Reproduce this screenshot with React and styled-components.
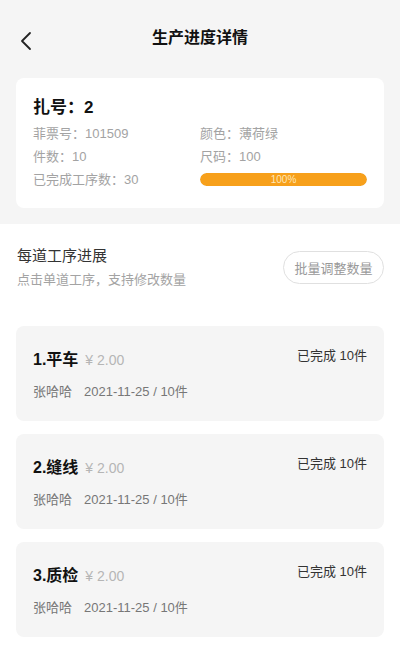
import React from "react";
import styled, { createGlobalStyle } from "styled-components";

const Global = createGlobalStyle`
  html, body { margin: 0; padding: 0; background: #ffffff; }
  body { font-family: "Liberation Sans", "Noto Sans CJK SC", sans-serif; -webkit-font-smoothing: antialiased; }
  * { box-sizing: border-box; }
`;

const Page = styled.div`
  width: 400px;
  min-height: 666px;
  background: #ffffff;
  display: flex;
  flex-direction: column;
`;

const Top = styled.div`
  background: #f5f5f5;
  padding: 0 16px 16px;
`;

const NavBar = styled.div`
  height: 78px;
  display: flex;
  align-items: center;
  justify-content: center;
  position: relative;
  padding-bottom: 2px;
`;

const BackBtn = styled.button`
  position: absolute;
  left: 0;
  top: 31px;
  width: 20px;
  height: 20px;
  border: 0;
  background: none;
  padding: 0;
  display: flex;
  align-items: center;
  justify-content: center;
`;

const Title = styled.h1`
  margin: 0;
  font-size: 16px;
  font-weight: 700;
  color: #111;
  line-height: 1;
`;

const InfoCard = styled.div`
  background: #ffffff;
  border-radius: 8px;
  padding: 18px 17px 20px;
  height: 130px;
`;

const BundleNo = styled.div`
  font-size: 17px;
  font-weight: 700;
  color: #111;
  line-height: 24px;
`;

const InfoGrid = styled.div`
  display: grid;
  grid-template-columns: 167px 167px;
  row-gap: 4px;
  margin-top: 4px;
`;

const InfoItem = styled.div`
  font-size: 13px;
  color: #a3a3a3;
  line-height: 19px;
  white-space: nowrap;
`;

const Progress = styled.div`
  height: 13px;
  margin-top: 3px;
  border-radius: 7px;
  background: #e8e8e8;
  position: relative;
  overflow: hidden;
`;

const ProgressFill = styled.div`
  height: 100%;
  background: #f7a01b;
  border-radius: 7px;
`;

const ProgressText = styled.span`
  position: absolute;
  inset: 0;
  display: flex;
  align-items: center;
  justify-content: center;
  font-size: 10px;
  color: #ffe7b8;
  line-height: 1;
`;

const Section = styled.div`
  padding: 22px 16px 0 17px;
  display: flex;
  justify-content: space-between;
  align-items: flex-start;
`;

const SectionTitle = styled.div`
  font-size: 15px;
  color: #333;
  line-height: 20px;
`;

const SectionSub = styled.div`
  font-size: 13px;
  color: #a3a3a3;
  line-height: 18px;
  margin-top: 5px;
`;

const PillButton = styled.button`
  margin-top: 5px;
  width: 101px;
  height: 33px;
  border: 1px solid #e0e0e0;
  border-radius: 17px;
  background: #fff;
  color: #999;
  font-family: inherit;
  font-size: 13px;
  padding: 0;
`;

const List = styled.div`
  display: flex;
  flex-direction: column;
  gap: 13px;
  padding: 37px 16px 0;
`;

const StepCard = styled.div`
  background: #f5f5f5;
  border-radius: 8px;
  height: 95px;
  padding: 22px 17px 0;
`;

const Row = styled.div`
  display: flex;
  justify-content: space-between;
  align-items: center;
`;

const StepName = styled.div`
  display: flex;
  align-items: baseline;
  gap: 7px;
`;

const StepTitle = styled.span`
  font-size: 16px;
  font-weight: 700;
  color: #111;
  line-height: 24px;
`;

const Price = styled.span`
  font-size: 14px;
  color: #b5b5b5;
`;

const Done = styled.span`
  font-size: 13px;
  color: #333;
  align-self: flex-start;
  line-height: 20px;
  margin-top: -2px;
`;

const Meta = styled.div`
  margin-top: 10px;
  font-size: 13px;
  color: #777;
  line-height: 19px;
  display: flex;
  gap: 12px;
`;

const steps = ["1.平车", "2.缝线", "3.质检"];

export default function App() {
  return (
    <Page>
      <Global />
      <Top>
        <NavBar>
          <BackBtn aria-label="返回">
            <svg width="14" height="20" viewBox="0 0 14 20" fill="none">
              <path d="M11 2 L3 10 L11 18" stroke="#222" strokeWidth="1.8" strokeLinecap="round" strokeLinejoin="round" />
            </svg>
          </BackBtn>
          <Title>生产进度详情</Title>
        </NavBar>
        <InfoCard>
          <BundleNo>扎号：2</BundleNo>
          <InfoGrid>
            <InfoItem>菲票号：101509</InfoItem>
            <InfoItem>颜色：薄荷绿</InfoItem>
            <InfoItem>件数：10</InfoItem>
            <InfoItem>尺码：100</InfoItem>
            <InfoItem>已完成工序数：30</InfoItem>
            <Progress>
              <ProgressFill style={{ width: "100%" }} />
              <ProgressText>100%</ProgressText>
            </Progress>
          </InfoGrid>
        </InfoCard>
      </Top>
      <Section>
        <div>
          <SectionTitle>每道工序进展</SectionTitle>
          <SectionSub>点击单道工序，支持修改数量</SectionSub>
        </div>
        <PillButton>批量调整数量</PillButton>
      </Section>
      <List>
        {steps.map((s) => (
          <StepCard key={s}>
            <Row>
              <StepName>
                <StepTitle>{s}</StepTitle>
                <Price>¥ 2.00</Price>
              </StepName>
              <Done>已完成 10件</Done>
            </Row>
            <Meta>
              <span>张哈哈</span>
              <span>2021-11-25 / 10件</span>
            </Meta>
          </StepCard>
        ))}
      </List>
    </Page>
  );
}
